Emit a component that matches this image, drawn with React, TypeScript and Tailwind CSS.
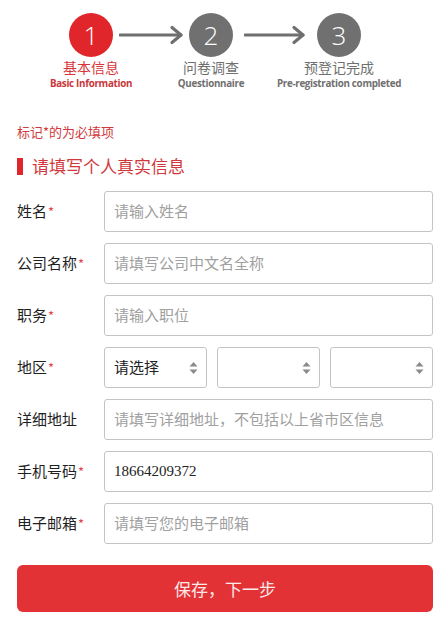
import React from "react";

const FONT = { fontFamily: '"Noto Sans CJK SC", "Noto Sans", sans-serif' };

function Caret() {
  return (
    <svg width="9" height="14" viewBox="0 0 9 14" className="shrink-0">
      <path d="M4.5 1 L8.5 5.5 L0.5 5.5 Z" fill="#8a8a8a" />
      <path d="M4.5 13 L8.5 8.5 L0.5 8.5 Z" fill="#8a8a8a" />
    </svg>
  );
}

function Arrow({ w }: { w: number }) {
  return (
    <svg width={w} height="20" viewBox={`0 0 ${w} 20`} className="shrink-0">
      <path d={`M1 10 H${w - 3}`} stroke="#6f6f6f" strokeWidth="3.2" strokeLinecap="round" />
      <path d={`M${w - 12} 2.5 L${w - 3} 10 L${w - 12} 17.5`} stroke="#6f6f6f" strokeWidth="3.2" fill="none" strokeLinecap="round" strokeLinejoin="round" />
    </svg>
  );
}

function Step({ n, zh, en, active }: { n: string; zh: string; en: string; active?: boolean }) {
  return (
    <div className="flex w-[44px] shrink-0 flex-col items-center">
      <div
        className={`flex h-[44px] w-[44px] items-center justify-center rounded-full text-[26px] font-light text-white ${active ? "bg-[#e0262b]" : "bg-[#707070]"}`}
        style={{ fontFamily: '"Open Sans", sans-serif' }}
      >
        {n}
      </div>
      <div className={`mt-[2px] whitespace-nowrap text-[14px] leading-[16px] ${active ? "text-[#d8353a]" : "text-[#6f6f6f]"}`}>{zh}</div>
      <div
        className={`mt-[4px] whitespace-nowrap text-[9.8px] font-bold leading-[10px] tracking-[-0.3px] ${active ? "text-[#c9363a]" : "text-[#707070]"}`}
        style={{ fontFamily: '"Open Sans", sans-serif' }}
      >
        {en}
      </div>
    </div>
  );
}

function Label({ text, req }: { text: string; req?: boolean }) {
  return (
    <div className="w-[87px] shrink-0 text-[15px] text-[#1f1f1f]">
      {text}
      {req && <span className="ml-[1px] text-[13px] text-[#e0464a]">*</span>}
    </div>
  );
}

function Input({ ph, value, serif }: { ph?: string; value?: string; serif?: boolean }) {
  return (
    <div className="flex h-[41px] flex-1 items-center rounded-[3px] border border-[#c4c4c4] px-[9px]">
      {value ? (
        <span className="text-[15px] text-[#222]" style={serif ? { fontFamily: '"Liberation Serif", serif' } : undefined}>
          {value}
        </span>
      ) : (
        <span className="text-[15px] text-[#a0a0a0]">{ph}</span>
      )}
    </div>
  );
}

function Select({ text }: { text?: string }) {
  return (
    <div className="flex h-[41px] items-center justify-between rounded-[3px] border border-[#c4c4c4] pl-[9px] pr-[8px]">
      <span className="text-[15px] text-[#222]">{text}</span>
      <Caret />
    </div>
  );
}

export default function App() {
  return (
    <div className="min-h-[617px] w-[448px] bg-white" style={FONT}>
      <div className="flex items-start pl-[69px] pt-[13px]">
        <Step n="1" zh="基本信息" en="Basic Information" active />
        <div className="ml-[6px] mt-[12px]"><Arrow w={65} /></div>
        <div className="ml-[5px]"><Step n="2" zh="问卷调查" en="Questionnaire" /></div>
        <div className="ml-[11px] mt-[12px]"><Arrow w={62} /></div>
        <div className="ml-[11px]"><Step n="3" zh="预登记完成" en="Pre-registration completed" /></div>
      </div>

      <div className="pl-[17px] pr-[15px]">
        <div className="mt-[34px] text-[13px] leading-[18px] text-[#d0383c]">标记*的为必填项</div>
        <div className="mt-[14px] flex items-center">
          <div className="h-[17px] w-[6px] bg-[#e0262b]" />
          <div className="ml-[9px] text-[17px] leading-[22px] text-[#d0383c]">请填写个人真实信息</div>
        </div>

        <div className="mt-[14px] flex flex-col gap-[11px]">
          <div className="flex items-center">
            <Label text="姓名" req />
            <Input ph="请输入姓名" />
          </div>
          <div className="flex items-center">
            <Label text="公司名称" req />
            <Input ph="请填写公司中文名全称" />
          </div>
          <div className="flex items-center">
            <Label text="职务" req />
            <Input ph="请输入职位" />
          </div>
          <div className="flex items-center">
            <Label text="地区" req />
            <div className="grid flex-1 grid-cols-3 gap-[10px]">
              <Select text="请选择" />
              <Select />
              <Select />
            </div>
          </div>
          <div className="flex items-center">
            <Label text="详细地址" />
            <Input ph="请填写详细地址，不包括以上省市区信息" />
          </div>
          <div className="flex items-center">
            <Label text="手机号码" req />
            <Input value="18664209372" serif />
          </div>
          <div className="flex items-center">
            <Label text="电子邮箱" req />
            <Input ph="请填写您的电子邮箱" />
          </div>
        </div>

        <button className="mt-[21px] flex h-[47px] w-full items-center justify-center rounded-[6px] bg-[#e33236] text-[17px] text-[#fbe9e9]">
          保存，下一步
        </button>
      </div>
    </div>
  );
}
